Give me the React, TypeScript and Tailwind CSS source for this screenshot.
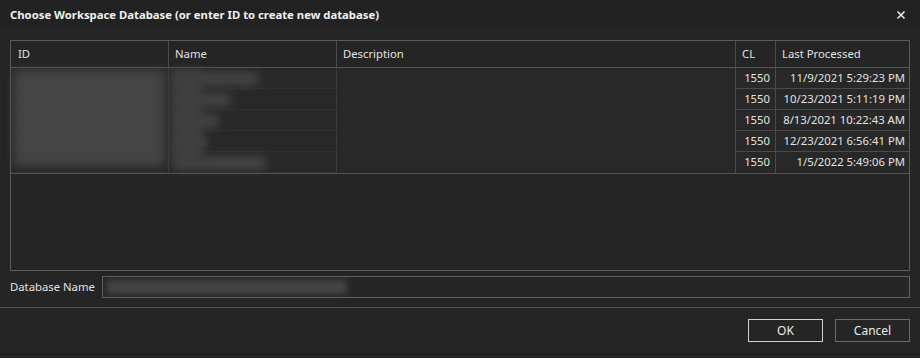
import React from "react";

const rows = [
  { cl: "1550", lp: "11/9/2021 5:29:23 PM", name: 84 },
  { cl: "1550", lp: "10/23/2021 5:11:19 PM", name: 56 },
  { cl: "1550", lp: "8/13/2021 10:22:43 AM", name: 44 },
  { cl: "1550", lp: "12/23/2021 6:56:41 PM", name: 32 },
  { cl: "1550", lp: "1/5/2022 5:49:06 PM", name: 92 },
];

export default function App() {
  return (
    <div
      className="w-[920px] h-[358px] bg-[#252525] flex flex-col text-[11.3px] text-[#e2e2e2] overflow-hidden"
      style={{ fontFamily: '"Noto Sans", "Open Sans", sans-serif' }}
    >
      {/* Title bar */}
      <div className="h-[30px] bg-[#222222] flex items-center justify-between pl-[10px] pr-[13px] shrink-0">
        <span className="font-bold text-[11.3px] text-[#f0f0f0]">
          Choose Workspace Database (or enter ID to create new database)
        </span>
        <svg width="10" height="10" viewBox="0 0 10 10" className="mr-[1px]">
          <path d="M1.5 1.5 L8.5 8.5 M8.5 1.5 L1.5 8.5" stroke="#e8e8e8" strokeWidth="1.6" />
        </svg>
      </div>

      {/* Table */}
      <div className="mx-[10px] mt-[10px] h-[231px] border border-[#5c5c5c] bg-[#252525] flex flex-col shrink-0">
        <div className="h-[27px] flex border-b border-[#555555] shrink-0">
          <div className="w-[158px] pl-[7px] flex items-center border-r border-[#4a4a4a]">ID</div>
          <div className="w-[168px] pl-[6px] flex items-center border-r border-[#4a4a4a]">Name</div>
          <div className="w-[399px] pl-[6px] flex items-center border-r border-[#4a4a4a]">Description</div>
          <div className="w-[40px] pl-[6px] flex items-center border-r border-[#4a4a4a]">CL</div>
          <div className="flex-1 pl-[6px] flex items-center">Last Processed</div>
        </div>
        <div className="relative flex flex-col border-b border-[#555555] bg-[#282828]">
          {rows.map((r, i) => (
            <div key={i} className="h-[21px] flex">
              <div className="w-[158px] border-r border-[#3a3a3a] border-b border-b-[#303030]" />
              <div className="w-[168px] border-r border-[#3a3a3a] border-b border-b-[#303030]" />
              <div className="w-[399px] border-r border-[#4a4a4a]" />
              <div
                className={`w-[40px] flex items-center justify-end pr-[5px] border-r border-[#4a4a4a] ${
                  i < rows.length - 1 ? "border-b border-b-[#4a4a4a]" : ""
                }`}
              >
                {r.cl}
              </div>
              <div
                className={`flex-1 flex items-center justify-end pr-[4px] ${
                  i < rows.length - 1 ? "border-b border-b-[#4a4a4a]" : ""
                }`}
              >
                {r.lp}
              </div>
            </div>
          ))}
          {/* blurred overlay for ID / Name */}
          <div className="absolute left-[3px] top-[2px] w-[151px] h-[96px] bg-[#444444] blur-[5px]" />
          {rows.map((r, i) => (
            <div
              key={"n" + i}
              className="absolute left-[163px] h-[14px] bg-[#434343] blur-[4px]"
              style={{ top: 4 + i * 21, width: r.name }}
            />
          ))}
          <div className="absolute left-[161px] top-[2px] w-[30px] h-[94px] bg-[#3f3f3f] blur-[4px]" />
        </div>
      </div>

      {/* Database Name */}
      <div className="h-[22px] mt-[5px] mx-[10px] flex items-center shrink-0">
        <span className="w-[92px]">Database Name</span>
        <div className="flex-1 h-[22px] border border-[#606060] bg-[#262626] relative">
          <div className="absolute left-[4px] top-[3px] w-[240px] h-[14px] bg-[#454545] blur-[3px]" />
        </div>
      </div>

      <div className="mt-[9px] h-px bg-[#555555] shrink-0" />

      {/* Buttons */}
      <div className="flex justify-end gap-[12px] pr-[10px] pt-[11px] shrink-0">
        <button className="w-[75px] h-[23px] border border-[#cfcfcf] bg-[#252525] text-[12px] text-[#eaeaea] flex items-center justify-center">
          OK
        </button>
        <button className="w-[75px] h-[23px] border border-[#6a6a6a] bg-[#252525] text-[12px] text-[#eaeaea] flex items-center justify-center">
          Cancel
        </button>
      </div>
      <div className="mt-[12px] h-px bg-[#1c1c1c] shrink-0" />
    </div>
  );
}
